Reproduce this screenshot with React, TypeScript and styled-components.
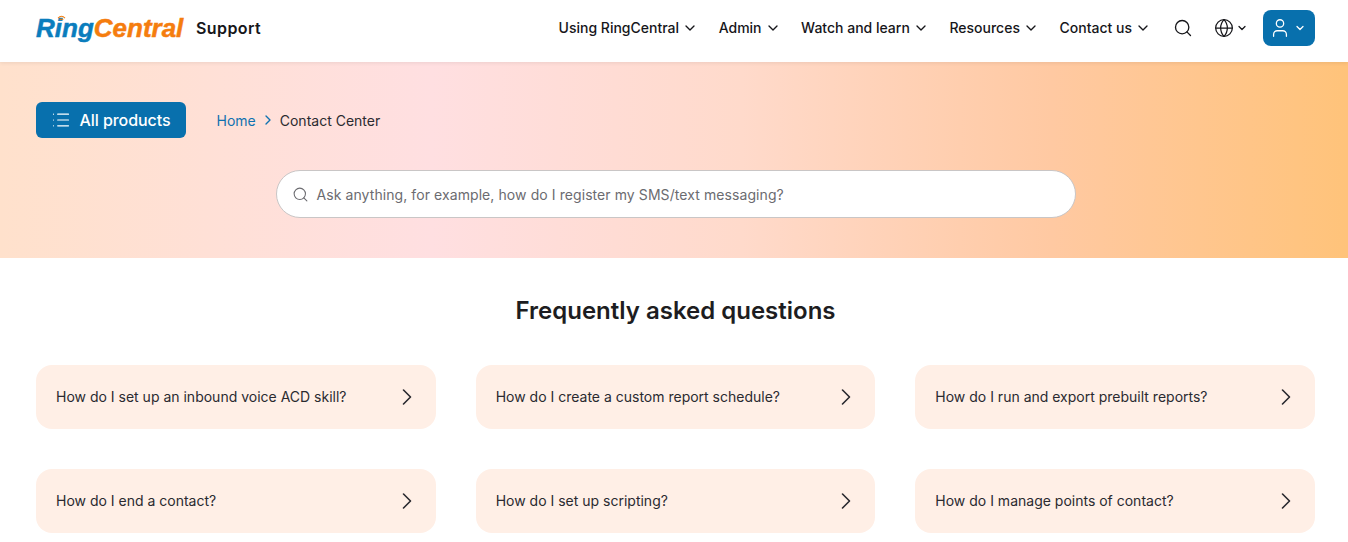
import { createGlobalStyle, styled } from 'styled-components';
import { ChevronDown, ChevronRight, Globe, List, Search, User } from 'lucide-react';

const GlobalStyle = createGlobalStyle`
  html, body {
    margin: 0;
    padding: 0;
    background: #fff;
    overflow: hidden;
    font-family: Inter, "Liberation Sans", sans-serif;
    color: #1d1d1f;
  }
  * { box-sizing: border-box; }
`;

const Header = styled.header`
  height: 62px;
  padding: 0 33px 6px 36px;
  display: flex;
  align-items: center;
  background: #fff;
  box-shadow: 0 1px 4px rgba(0, 0, 0, 0.08);
  position: relative;
`;

const Brand = styled.div`
  display: flex;
  align-items: center;
  gap: 12px;
  margin-right: auto;
`;

const Logo = styled.div`
  position: relative;
  font-family: "Liberation Sans", Arial, sans-serif;
  font-weight: 700;
  font-style: italic;
  font-size: 26px;
  line-height: 28px;
  -webkit-text-stroke: 0.5px currentColor;
  white-space: nowrap;
  width: 148px;
`;

const LogoBlue = styled.span`
  color: #0a7dbd;
`;

const LogoOrange = styled.span`
  color: #f57d0e;
`;

const LogoWaves = styled.svg`
  position: absolute;
  left: 21px;
  top: 1px;
`;

const BrandLabel = styled.span`
  font-size: 16px;
  font-weight: 600;
  letter-spacing: 0.4px;
  color: #16161a;
`;

const Nav = styled.nav`
  display: flex;
  align-items: center;
  gap: 20.6px;
`;

const NavItem = styled.a`
  display: flex;
  align-items: center;
  gap: 3px;
  padding-bottom: 1px;
  font-size: 14px;
  font-weight: 500;
  color: #16161a;
  white-space: nowrap;
`;

const Tools = styled.div`
  display: flex;
  align-items: center;
  margin-left: 22px;
`;

const LangSwitch = styled.div`
  display: flex;
  align-items: center;
  gap: 2px;
  margin-left: 21px;
  color: #16161a;
`;

const AccountButton = styled.button`
  width: 52px;
  height: 36px;
  margin-left: 15px;
  border: 0;
  border-radius: 8px;
  background: #0870ad;
  color: #fff;
  display: flex;
  align-items: center;
  justify-content: center;
  gap: 3px;
  padding: 0 3px 0 0;
`;

const Hero = styled.section`
  height: 196px;
  padding: 40px 33px 0 36px;
  background: linear-gradient(90deg, #ffe1cc 0%, #ffdfe1 32%, #ffdacb 55%, #ffc9a2 78%, #ffc37a 100%);
`;

const HeroTop = styled.div`
  display: flex;
  align-items: center;
  gap: 30.5px;
`;

const ProductsButton = styled.button`
  width: 150px;
  height: 36px;
  border: 0;
  border-radius: 6px;
  background: #0870ad;
  color: #fff;
  display: flex;
  align-items: center;
  justify-content: center;
  gap: 8px;
  font-family: inherit;
  font-size: 16px;
  font-weight: 500;
  letter-spacing: -0.05px;
  padding: 0;
`;

const Breadcrumb = styled.div`
  display: flex;
  align-items: center;
  gap: 4px;
  font-size: 14px;
  color: #2b2b30;
`;

const Crumb = styled.a`
  color: #0f72b0;
`;

const SearchBar = styled.div`
  width: 800px;
  height: 48px;
  margin: 32px 0 0 240px;
  padding: 0 14.5px;
  display: flex;
  align-items: center;
  gap: 8px;
  background: #fff;
  border: 1px solid #c9c6c6;
  border-radius: 24px;
  color: #6b6b70;
  font-size: 14px;
  letter-spacing: 0.08px;
`;

const Faq = styled.section`
  padding: 0 33px 0 36px;
`;

const FaqTitle = styled.h2`
  margin: 0;
  padding-top: 38px;
  text-align: center;
  font-size: 24px;
  line-height: 30px;
  font-weight: 600;
  color: #1d1d21;
`;

const FaqGrid = styled.div`
  margin-top: 39px;
  display: grid;
  grid-template-columns: repeat(3, 1fr);
  gap: 40px;
`;

const FaqCard = styled.a`
  height: 64px;
  padding: 0 15px 1px 20px;
  display: flex;
  align-items: center;
  justify-content: space-between;
  background: #ffefe6;
  border-radius: 16px;
  font-size: 14px;
  color: #2a2a30;
`;

const questions = [
  'How do I set up an inbound voice ACD skill?',
  'How do I create a custom report schedule?',
  'How do I run and export prebuilt reports?',
  'How do I end a contact?',
  'How do I set up scripting?',
  'How do I manage points of contact?',
];

const navLinks = ['Using RingCentral', 'Admin', 'Watch and learn', 'Resources', 'Contact us'];

export default function App() {
  return (
    <>
      <GlobalStyle />
      <Header>
        <Brand>
          <Logo>
            <LogoBlue>Ring</LogoBlue>
            <LogoOrange>Central</LogoOrange>
            <LogoWaves width="9" height="7" viewBox="0 0 10 8" fill="none" stroke="#f57d0e" strokeWidth="1.2">
              <path d="M1 3.5C3.5 .8 6.5 .8 9 3.5" />
              <path d="M3 5.5C4.3 4.2 5.7 4.2 7 5.5" />
            </LogoWaves>
          </Logo>
          <BrandLabel>Support</BrandLabel>
        </Brand>
        <Nav>
          {navLinks.map((link) => (
            <NavItem key={link}>
              {link}
              <ChevronDown size={16} strokeWidth={2} />
            </NavItem>
          ))}
        </Nav>
        <Tools>
          <Search size={20} strokeWidth={1.6} color="#16161a" />
          <LangSwitch>
            <Globe size={20} strokeWidth={1.5} />
            <ChevronDown size={12} strokeWidth={2.5} />
          </LangSwitch>
          <AccountButton>
            <User size={22} strokeWidth={1.4} />
            <ChevronDown size={12} strokeWidth={2.5} />
          </AccountButton>
        </Tools>
      </Header>
      <Hero>
        <HeroTop>
          <ProductsButton>
            <List size={20} strokeWidth={1.4} />
            All products
          </ProductsButton>
          <Breadcrumb>
            <Crumb>Home</Crumb>
            <ChevronRight size={16} strokeWidth={2} color="#0f72b0" />
            Contact Center
          </Breadcrumb>
        </HeroTop>
        <SearchBar>
          <Search size={17} strokeWidth={1.5} />
          Ask anything, for example, how do I register my SMS/text messaging?
        </SearchBar>
      </Hero>
      <Faq>
        <FaqTitle>Frequently asked questions</FaqTitle>
        <FaqGrid>
          {questions.map((question) => (
            <FaqCard key={question}>
              {question}
              <ChevronRight size={28} strokeWidth={1.4} color="#2a2a30" />
            </FaqCard>
          ))}
        </FaqGrid>
      </Faq>
    </>
  );
}
